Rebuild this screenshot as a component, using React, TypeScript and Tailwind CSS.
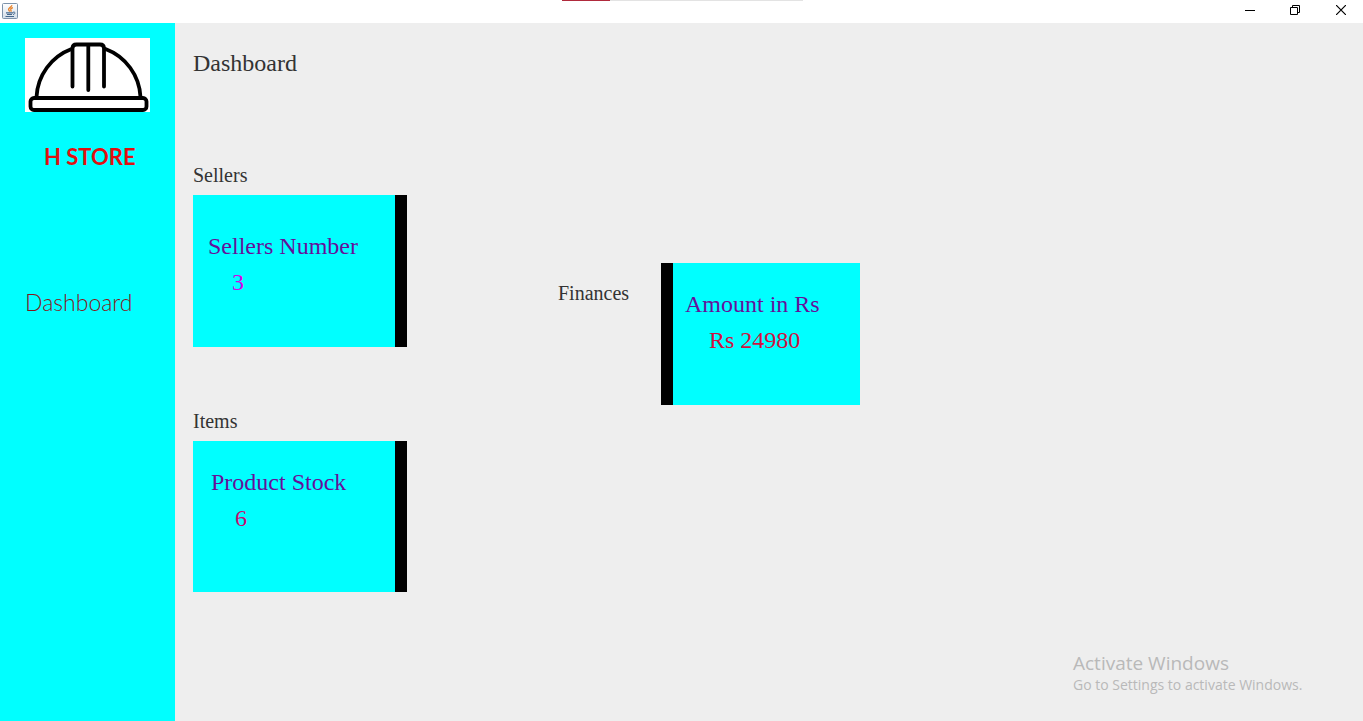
import type { ReactNode } from "react";

const serif = "font-['Liberation_Serif',serif]";

function JavaIcon() {
  return (
    <svg width="16" height="16" viewBox="0 0 16 16" aria-hidden="true">
      <defs>
        <linearGradient id="tile" x1="0" y1="0" x2="0" y2="1">
          <stop offset="0" stopColor="#ffffff" />
          <stop offset="1" stopColor="#d3dde8" />
        </linearGradient>
      </defs>
      <rect x="0.5" y="0.5" width="15" height="15" rx="1" fill="url(#tile)" stroke="#7d93aa" />
      <path d="M9.8 2.2C10 4 6.400 4.800 6.600 6.500c.1.900.9 1.300 1.100 2.200M10.800 4.500c-1.300.6-2.400 1.300-2.100 2.300.2.600.7 1 .2 1.800" fill="none" stroke="#e8842c" strokeWidth="1.400" />
      <path d="M4 9.800h7M5 11.500h5M3.500 13.500h8.500" fill="none" stroke="#46688c" strokeWidth="1.200" />
      <path d="M11 9.200c2.600-.7 2.800 1.700 0 2.300" fill="none" stroke="#46688c" />
    </svg>
  );
}

function HelmetLogo() {
  return (
    <svg className="bg-white" width="125" height="74" viewBox="0 0 125 74" role="img" aria-label="H Store">
      <g fill="none" stroke="#000" strokeWidth="3.800" strokeLinecap="round" strokeLinejoin="round">
        <path d="M11.500 59A54 54 0 0 1 46.500 11M80.500 11A54 54 0 0 1 115.500 59" />
        <path d="M47.500 48.500V10.500q0-4 4-4h23.500q4 0 4 4v38M63.300 6.500V52" />
        <rect x="5.500" y="60" width="116" height="12" rx="3.500" />
      </g>
    </svg>
  );
}

function TitleBar() {
  return (
    <header className="flex h-[23px] items-start bg-white">
      <div className="flex flex-1 pl-0.5 pt-[3px]">
        <JavaIcon />
      </div>
      <div className="flex h-px w-[241px] bg-[#e3e3e3]">
        <div className="w-12 bg-[#b02a3c]" />
      </div>
      <div className="flex flex-1 justify-end">
        <button type="button" aria-label="Minimize" className="flex h-5 w-[45px] items-center justify-center">
          <svg width="10" height="10" viewBox="0 0 10 10"><path d="M0 5.500h10" stroke="#000" /></svg>
        </button>
        <button type="button" aria-label="Restore" className="flex h-5 w-[46px] items-center justify-center">
          <svg width="10" height="10" viewBox="0 0 10 10" fill="none" stroke="#000"><path d="M.5 2.500h7v7h-7zM2.500 2.500v-2h7v7h-2" /></svg>
        </button>
        <button type="button" aria-label="Close" className="flex h-5 w-[45px] items-center justify-center">
          <svg width="10" height="10" viewBox="0 0 10 10"><path d="M0 0l10 10M10 0L0 10" stroke="#000" strokeWidth="1.200" /></svg>
        </button>
      </div>
    </header>
  );
}

function Card({ className, children }: { className: string; children: ReactNode }) {
  return <div className={`border-black bg-[#00ffff] text-2xl leading-9 text-[#66109a] ${className}`}>{children}</div>;
}

export default function App() {
  return (
    <div className="relative flex min-h-screen flex-col bg-[#eeeeee]">
      <TitleBar />
      <div className="flex flex-1">
        <aside className="flex w-[175px] shrink-0 flex-col bg-[#00ffff] pl-[25px] pt-[15px] font-['Lato',sans-serif]">
          <HelmetLogo />
          <div className="mt-[29px] pl-[19px] text-[22px] font-bold leading-8 text-[#e01010]">H STORE</div>
          <a href="#dashboard" className="mt-[113px] text-[23px] font-light leading-8 text-[#85161b]">Dashboard</a>
        </aside>

        <main id="dashboard" className={`flex-1 pl-[18px] pt-6 text-[#333333] ${serif}`}>
          <h1 className="text-2xl leading-8">Dashboard</h1>
          <div className="mt-[84px] flex items-start">
            <div className="flex w-[214px] flex-col gap-[62px]">
              <section>
                <h2 className="mb-2 text-xl leading-6">Sellers</h2>
                <Card className="border-r-[12px] pb-[47px] pl-[15px] pt-[33px]">
                  <p>Sellers Number</p>
                  <p className="pl-6 text-[#d800e8]">3</p>
                </Card>
              </section>
              <section>
                <h2 className="mb-2 text-xl leading-6">Items</h2>
                <Card className="border-r-[12px] pb-14 pl-[18px] pt-[23px]">
                  <p>Product Stock</p>
                  <p className="pl-6 text-[#c80a70]">6</p>
                </Card>
              </section>
            </div>
            <section className="ml-[151px] mt-[100px] flex">
              <h2 className="mt-[18px] w-[103px] text-xl leading-6">Finances</h2>
              <Card className="w-[199px] border-l-[12px] pb-[47px] pl-3 pt-[23px]">
                <p>Amount in Rs</p>
                <p className="pl-6 text-[#d01040]">Rs 24980</p>
              </Card>
            </section>
          </div>
        </main>
      </div>
      <div className="absolute bottom-[26px] right-[54px] w-[236px] whitespace-nowrap font-['Open_Sans',sans-serif] text-[#b9b9b9]">
        <p className="text-[19px] leading-6">Activate Windows</p>
        <p className="text-sm leading-5">Go to Settings to activate Windows.</p>
      </div>
    </div>
  );
}
